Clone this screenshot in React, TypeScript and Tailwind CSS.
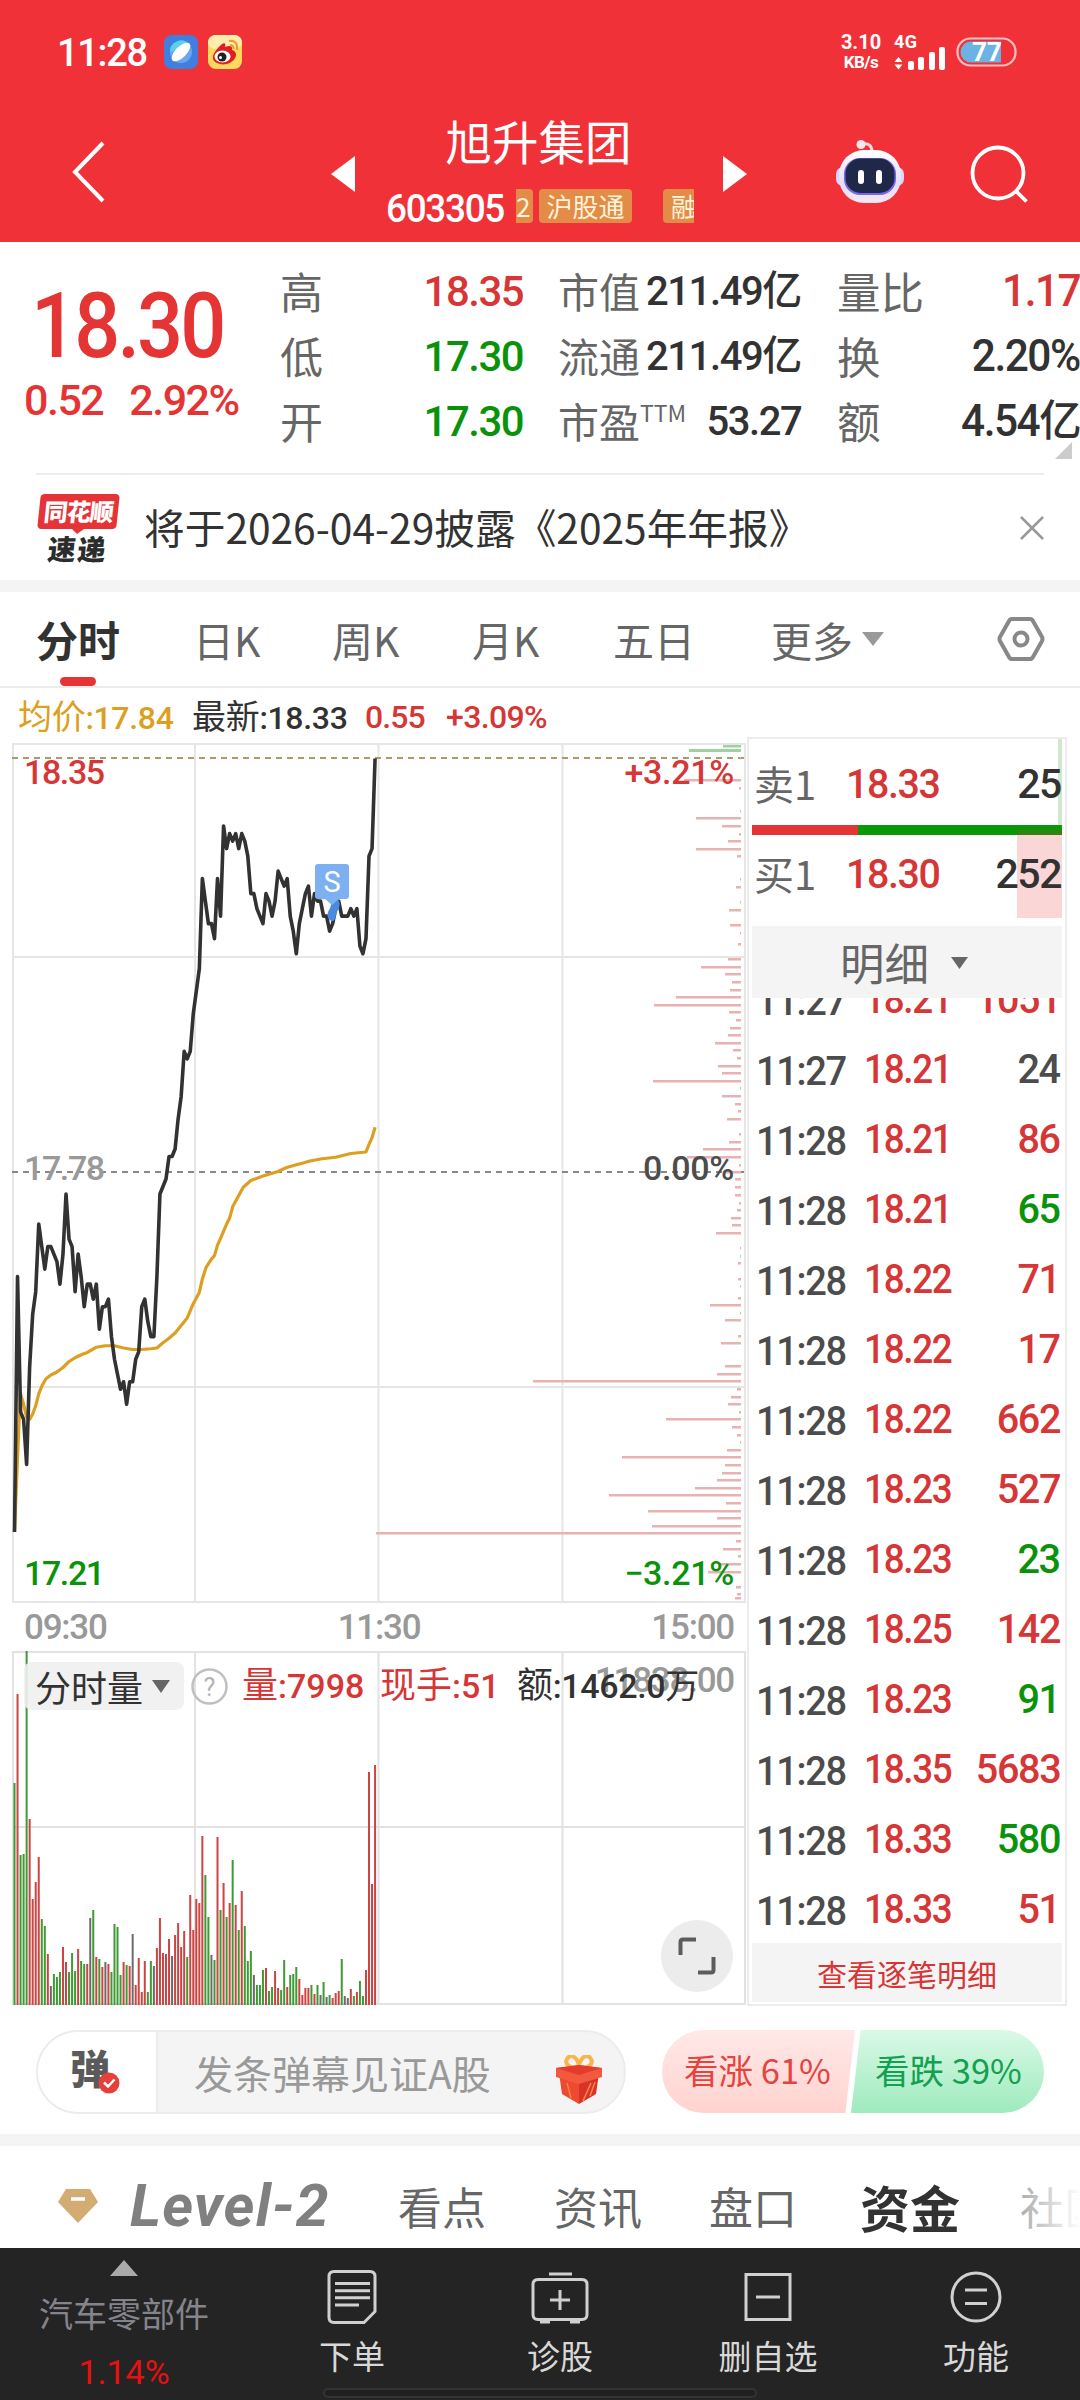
import type { ReactNode } from "react";

const profileBars: [number, number][] = [
  [758, 1], [780, 57], [788, 2], [811, 1], [818, 45], [826, 19], [834, 2], [841, 13], [849, 45], [856, 4],
  [879, 1], [887, 5], [902, 1], [910, 12], [925, 11], [933, 1], [944, 3], [959, 13], [967, 40], [974, 16],
  [982, 9], [990, 11], [997, 65], [1005, 87], [1012, 12], [1020, 5], [1028, 11], [1035, 13], [1043, 26],
  [1050, 8], [1058, 4], [1066, 23], [1073, 19], [1081, 88], [1088, 1], [1096, 19], [1104, 6], [1111, 3],
  [1119, 14], [1134, 2], [1142, 12], [1149, 38], [1157, 54], [1165, 2], [1172, 16], [1179, 6], [1187, 6],
  [1195, 6], [1203, 2], [1210, 4], [1218, 10], [1225, 9], [1233, 25], [1248, 1], [1256, 1], [1263, 3],
  [1279, 3], [1286, 1], [1298, 3], [1305, 31], [1313, 1], [1320, 16], [1336, 3], [1343, 20], [1366, 16],
  [1374, 24], [1381, 208], [1389, 4], [1397, 10], [1404, 13], [1412, 2], [1419, 75], [1427, 9], [1435, 4],
  [1442, 1], [1450, 14], [1457, 119], [1465, 16], [1473, 19], [1480, 24], [1488, 46], [1495, 132],
  [1503, 15], [1511, 93], [1518, 24], [1526, 89], [1533, 365], [1541, 5], [1549, 18], [1556, 3], [1564, 23],
  [1572, 33], [1587, 5], [1594, 4], [1598, 6],
];

// minute prices in cents, relative to the previous close
const prices = [
  -48, -14, -32, -33, -39, -26, -19, -16, -7, -10, -13, -10, -10, -11, -12, -15, -11, -3, -9, -10, -16, -11,
  -14, -18, -15, -15, -17, -15, -21, -18, -18, -17, -22, -25, -27, -29, -28, -31, -28, -28, -25, -24, -18, -17,
  -20, -22, -22, -14, -3, -2, -1, 2, 2, 3, 7, 10, 16, 15, 16, 21, 24, 27, 39, 36, 33, 33, 31, 39, 34, 46, 43,
  45, 44, 45, 43, 45, 44, 42, 37, 37, 35, 34, 33, 37, 36, 34, 36, 40, 39, 38, 39, 34, 32, 29, 33, 35, 37, 38,
  34, 37, 36, 36, 34, 34, 32, 33, 35, 36, 34, 34, 34, 35, 34, 35, 30, 29, 31, 42, 43, 55,
];

const average: [number, number][] = [
  [0, -48], [1.9, -29.5], [3, -31], [4, -32.7], [5, -33], [6, -32.3], [7, -31.2], [8, -29.6], [9.1, -28.5],
  [10.4, -27.6], [12, -27.1], [14, -26.7], [16, -26.1], [18, -25.3], [20, -24.8], [22, -24.4], [24, -24.1],
  [27, -23.4], [30, -23.2], [33, -23.2], [36, -23.5], [39, -23.7], [42, -23.7], [45, -23.6], [47, -23.5],
  [49, -22.8], [51, -22.2], [53, -21.5], [55, -20.5], [57, -19.5], [59, -17.6], [61, -16.1], [62, -14.3],
  [63.2, -12.8], [64.6, -11.9], [66, -11.2], [67, -9.8], [68, -8.9], [70, -7], [71, -6.2], [72, -4.7],
  [74, -3.2], [75.5, -2.1], [78, -1.2], [82, -0.6], [87, 0], [89.6, 0.5], [93, 0.9], [95, 1.1], [97.5, 1.4],
  [101.5, 1.7], [106, 1.9], [109, 2.2], [111, 2.4], [116, 2.6], [117, 3.6], [118, 4.5], [119, 5.9],
];

const volumes =
  "g222 r311 g150 g151 g355 r186 r106 r123 r148 g86 g79 r51 k19 g31 g28 g33 r58 r43 g33 g52 g34 r56 g44 g41 r41 k87 g95 r48 g46 r38 k43 r41 g33 g81 g78 g30 r43 g40 r39 k71 r20 r47 r13 r44 g13 g44 k39 r57 r87 r52 r51 r66 k49 r70 r82 r58 r74 g48 r110 r75 r106 r102 r169 g130 g88 k50 g45 r168 g95 r122 g88 r102 g145 r100 g75 r114 g79 g44 g54 k30 g20 g20 g35 r37 g14 g18 r34 r17 g15 g45 r18 g30 g31 g38 r26 r10 r17 r17 g20 r11 g20 k10 g23 k8 g10 r7 r12 r14 g46 k9 k7 r16 g9 r13 g24 g9 r35 r233 r121 r240".split(
    " ",
  );

const volumeColors: Record<string, string> = { g: "#3f9a35", r: "#cc4444", k: "#6b6b6b" };

const trades = [
  ["11:27", "18.21", "1051", "r"],
  ["11:27", "18.21", "24", "k"],
  ["11:28", "18.21", "86", "r"],
  ["11:28", "18.21", "65", "g"],
  ["11:28", "18.22", "71", "r"],
  ["11:28", "18.22", "17", "r"],
  ["11:28", "18.22", "662", "r"],
  ["11:28", "18.23", "527", "r"],
  ["11:28", "18.23", "23", "g"],
  ["11:28", "18.25", "142", "r"],
  ["11:28", "18.23", "91", "g"],
  ["11:28", "18.35", "5683", "r"],
  ["11:28", "18.33", "580", "g"],
  ["11:28", "18.33", "51", "r"],
];

const textColors: Record<string, string> = {
  r: "text-[#d73636]",
  g: "text-[#0a930a]",
  k: "text-[#4c4c4c]",
};

const x = (minute: number) => 2.5 + minute * 3.03;
const y = (cents: number) => 428.5 - cents * 7.51;

function Num({ children, className = "" }: { children: ReactNode; className?: string }) {
  return (
    <span className={`whitespace-nowrap font-['Roboto','Noto_Sans_CJK_SC',sans-serif] font-medium ${className}`}>
      {children}
    </span>
  );
}

// narrow digits
function Tight({ children, className = "" }: { children: ReactNode; className?: string }) {
  return <Num className={`inline-block translate-y-px tracking-[-0.035em] ${className}`}>{children}</Num>;
}

function StatusBar() {
  return (
    <div className="flex h-[104px] items-center pl-[57px] pr-[62px] text-white">
      <Tight className="w-[107px] text-[38px]">11:28</Tight>
      <svg className="mr-[10px] size-[34px]" viewBox="0 0 34 34">
        <rect width="34" height="34" rx="8" fill="#3f7fe0" />
        <circle cx="17" cy="17" r="11" fill="#6aa5f0" />
        <path d="M6 17a11 11 0 0 1 19-8z" fill="#58d0ee" />
        <ellipse cx="17" cy="17" rx="5.500" ry="12" fill="#fff" transform="rotate(45 17 17)" />
      </svg>
      <svg className="size-[34px]" viewBox="0 0 34 34">
        <rect width="34" height="34" rx="8" fill="#ffd85c" />
        <rect width="34" height="14" rx="8" fill="#ffecb0" />
        <path d="M14 9c3-2 4 0 3 3 5-2 8-1 7 3 4 1 5 5 3 8-3 6-12 8-18 5s-6-9 5-19z" fill="#e02020" />
        <ellipse cx="14.500" cy="21.500" rx="8" ry="6" fill="#fff" />
        <circle cx="14" cy="22" r="4.500" fill="#222" />
        <circle cx="12.500" cy="22.500" r="1.500" fill="#fff" />
        <path d="M21 6c6-1 9 3 8 9M22 10c3 0 4 2 3.500 4" fill="none" stroke="#f29a1f" strokeWidth="2" />
      </svg>
      <div className="ml-auto flex items-center">
        <div className="flex w-[44px] flex-col items-center font-['Roboto',sans-serif] text-[20px] font-bold leading-[20px]">
          <span>3.10</span>
          <span className="text-[17px] tracking-[-0.03em]">KB/s</span>
        </div>
        <svg className="ml-[11px] h-[38px] w-[54px]" viewBox="0 0 54 38">
          <text x="0" y="15" fill="#fff" fontFamily="Roboto" fontSize="18" fontWeight="700" textLength="23">4G</text>
          <path d="M4.500 24l4 5h-8zM4.500 36.500l4-5h-8z" fill="#fff" />
          <g fill="#fff">
            <rect x="14" y="28" width="6" height="9" rx="2" />
            <rect x="24" y="24" width="6" height="13" rx="2" />
            <rect x="35" y="19" width="6" height="18" rx="2" />
            <rect x="45" y="14" width="6" height="23" rx="2" />
          </g>
        </svg>
        <svg className="ml-[8px] h-[30px] w-[62px]" viewBox="0 0 62 30">
          <rect x="1.500" y="1.500" width="58" height="27" rx="13" fill="none" stroke="#fbc0c2" strokeWidth="2.200" />
          <path d="M15 4.500h30v21H15a10.500 10.500 0 0 1 0-21z" fill="#6cb2e2" />
          <text x="31" y="24" fill="#fff" fontFamily="Roboto" fontSize="26" fontWeight="700" textAnchor="middle">77</text>
        </svg>
      </div>
    </div>
  );
}

function Header() {
  return (
    <header className="h-[242px] bg-[#f13138]">
      <StatusBar />
      <div className="flex h-[138px] text-white">
        <svg className="ml-[69px] mt-[35px] h-[66px] w-[40px]" viewBox="0 0 40 66" fill="none" stroke="#fff" strokeWidth="4">
          <path d="M34 4L6 33l28 29" />
        </svg>
        <svg className="ml-[221px] mt-[51px] h-[38px] w-[26px]" viewBox="0 0 26 38">
          <path d="M1 19L25 1v36z" fill="#fff" />
        </svg>
        <div className="ml-[30px] flex w-[308px] flex-col items-center pt-[9px]">
          <h1 className="pr-[3px] text-[46.500px] leading-[54px]">旭升集团</h1>
          <div className="mt-[5px] flex h-[70px] w-full items-start pt-[17px]">
            <div className="w-[130px] shrink-0">
              <Tight className="origin-left scale-x-[0.97] text-[38px] leading-[38px]">603305</Tight>
            </div>
            <div className="flex w-[178px] items-center overflow-hidden text-[26px] leading-[34px] text-[#fff3d8]">
              <span className="h-[34px] w-[17px] shrink-0 rounded-r bg-[#e28c48]">2</span>
              <span className="ml-[6px] h-[34px] w-[93px] shrink-0 rounded bg-[#e28c48] text-center">沪股通</span>
              <span className="ml-[31px] h-[34px] w-[70px] shrink-0 rounded bg-[#e28c48] pl-[8px]">融资</span>
            </div>
          </div>
        </div>
        <svg className="ml-[28px] mt-[51px] h-[38px] w-[26px]" viewBox="0 0 26 38">
          <path d="M25 19L1 1v36z" fill="#fff" />
        </svg>
        <svg className="ml-[88px] mt-[34px] h-[68px] w-[70px]" viewBox="0 0 70 68">
          <defs>
            <linearGradient id="shell" x1="0" y1="0" x2="0" y2="1">
              <stop offset="0" stopColor="#ffffff" />
              <stop offset="0.600" stopColor="#e4defa" />
              <stop offset="1" stopColor="#f6e6f2" />
            </linearGradient>
          </defs>
          <path d="M27 6c6-1 9 2 9 8" fill="none" stroke="#f3d9e6" strokeWidth="3" />
          <circle cx="25" cy="6.500" r="4.500" fill="#f8e6ee" />
          <rect x="0" y="29" width="68" height="19" rx="7" fill="#dcd5f8" />
          <rect x="3" y="12" width="62" height="53" rx="25" fill="url(#shell)" />
          <rect x="8" y="20" width="52" height="37" rx="16" fill="#7668e0" />
          <rect x="9.500" y="20.500" width="49" height="34.500" rx="15" fill="#1f2848" />
          <rect x="22" y="32" width="6" height="14" rx="3" fill="#fff" />
          <rect x="40" y="32" width="6" height="14" rx="3" fill="#fff" />
        </svg>
        <svg className="ml-[64px] mt-[40px] h-[62px] w-[62px]" viewBox="0 0 62 62" fill="none" stroke="#fff" strokeWidth="3.800">
          <circle cx="28" cy="29" r="25.500" />
          <path d="M46 47l10.500 10.500" />
        </svg>
      </div>
    </header>
  );
}

function Stat({ label, value, color = "text-[#323232]" }: { label: ReactNode; value: string; color?: string }) {
  return (
    <div className="flex h-[65px] items-center justify-between">
      <span className="whitespace-nowrap text-[#666666]">{label}</span>
      <Tight className={`origin-right scale-x-[0.975] ${color}`}>{value}</Tight>
    </div>
  );
}

function Quote() {
  return (
    <section className="relative flex h-[231px] pt-[16px]">
      <div className="w-[262px] pl-[24px] text-[#e43434]">
        <div className="mt-[18px] pl-[7px]">
          <Tight className="origin-left scale-x-[0.9] text-[90px] leading-[100px]">18.30</Tight>
        </div>
        <Tight className="mt-[-2px] origin-left text-[43px] leading-[50px]">
          0.52<span className="ml-[26px]">2.92%</span>
        </Tight>
      </div>
      <div className="ml-[18px] w-[243px] text-[43px]">
        <Stat label="高" value="18.35" color="text-[#d73636]" />
        <Stat label="低" value="17.30" color="text-[#0a930a]" />
        <Stat label="开" value="17.30" color="text-[#0a930a]" />
      </div>
      <div className="ml-[35px] w-[243px] text-[41px]">
        <Stat label="市值" value="211.49亿" />
        <Stat label="流通" value="211.49亿" />
        <Stat label={<>市盈<sup className="top-[-0.7em] text-[23px]">TTM</sup></>} value="53.27" />
      </div>
      <div className="ml-[36px] w-[243px] text-[43.500px]">
        <Stat label="量比" value="1.17" color="text-[#d73636]" />
        <Stat label="换" value="2.20%" />
        <Stat label="额" value="4.54亿" />
      </div>
      <svg className="absolute left-[1055px] top-[200px] size-[17px]" viewBox="0 0 17 17">
        <path d="M17 0v17H0z" fill="#cccccc" />
      </svg>
    </section>
  );
}

function Notice() {
  return (
    <section className="mx-[36px] flex h-[107px] items-center border-t-2 border-[#ececec]">
      <div className="flex w-[84px] flex-col items-center">
        <div className="h-[35px] w-[79px] -skew-x-6 rounded-[4px] bg-[#e53338] text-center text-[24px] font-black leading-[34px] tracking-[-0.04em] text-white">
          同花顺
        </div>
        <svg className="h-[5px] w-[12px]" viewBox="0 0 12 5">
          <path d="M0 0h12L5 5z" fill="#e53338" />
        </svg>
        <div className="-skew-x-6 text-[28px] font-black leading-[28px] tracking-[0.06em] text-[#2c2c2c]">速递</div>
      </div>
      <p className="ml-[24px] text-[40.700px] text-[#323232]">将于2026-04-29披露《2025年年报》</p>
      <svg className="ml-auto size-[24px]" viewBox="0 0 24 24" stroke="#999" strokeWidth="2.500">
        <path d="M1 1l22 22M23 1L1 23" />
      </svg>
    </section>
  );
}

function ChartTabs() {
  return (
    <nav className="flex h-[96px] items-center border-b-2 border-[#ececec] text-[41px] text-[#666666]">
      <div className="relative ml-[36px] w-[157px] text-[42px] font-bold text-[#323232]">
        分时
        <span className="absolute left-[24px] top-[59px] h-[9px] w-[36px] rounded-full bg-[#e43434]" />
      </div>
      <span className="w-[139px]">日K</span>
      <span className="w-[140px]">周K</span>
      <span className="w-[141px]">月K</span>
      <span className="w-[158px]">五日</span>
      <span>更多</span>
      <svg className="ml-[9px] h-[16px] w-[22px]" viewBox="0 0 22 16">
        <path d="M0 1h22L11 15z" fill="#999" />
      </svg>
      <svg className="ml-[113px] h-[46px] w-[48px]" viewBox="0 0 48 46" fill="none" stroke="#888" strokeWidth="4">
        <path d="M15 3h18q2 0 3 2l9 16q1 2 0 4l-9 16q-1 2-3 2H15q-2 0-3-2L3 25q-1-2 0-4l9-16q1-2 3-2z" />
        <circle cx="24" cy="23" r="6.500" />
      </svg>
    </nav>
  );
}

function PriceChart() {
  return (
    <svg className="h-[860px] w-[735px]" viewBox="0 0 735 860">
      <g stroke="#e6e6e6" strokeWidth="2" fill="none">
        <path d="M0 1h734M0 214h734M0 644h734M0 859h734M1 0v860M183 0v860M366.500 0v860M550.500 0v860M733 0v860" />
      </g>
      <path d="M0 429h734" stroke="#888" strokeWidth="2" strokeDasharray="6 5" />
      <path d="M0 15h734" stroke="#ab9a6a" strokeWidth="2" strokeDasharray="6 5" />
      <rect x="711" y="2" width="18" height="2.500" fill="#9fd09f" />
      <rect x="677" y="6" width="52" height="3" fill="#9fd09f" />
      {profileBars.map(([top, width]) => (
        <rect key={top} x={729 - width} y={top - 744} width={width} height="2.500" fill="#e9b2b2" />
      ))}
      <polyline
        points={average.map(([m, c]) => `${x(m)},${y(c)}`).join(" ")}
        fill="none"
        stroke="#dd9f22"
        strokeWidth="3.200"
        strokeLinejoin="round"
      />
      <polyline
        points={prices.map((c, m) => `${x(m)},${y(c)}`).join(" ")}
        fill="none"
        stroke="#323232"
        strokeWidth="3.600"
        strokeLinejoin="round"
      />
      <path d="M322 155c6 0 7 7 4 12s-2 12-6 11-6-6-3-11 2-10 5-12z" fill="#4a8ae0" />
      <rect x="303" y="121" width="34" height="35" rx="3" fill="#7db0f0" />
      <path d="M312 155l8 7 8-7z" fill="#7db0f0" />
      <text x="320" y="149" fill="#fff" fontFamily="Roboto" fontSize="29" textAnchor="middle">S</text>
      <g fontFamily="Roboto" fontSize="34" fontWeight="500" letterSpacing="-1.400">
        <text x="12" y="41" fill="#d73636">18.35</text>
        <text x="12" y="437" fill="#999">17.78</text>
        <text x="12" y="842" fill="#0a930a">17.21</text>
      </g>
      <g fontFamily="Roboto" fontSize="34" fontWeight="500" letterSpacing="-0.300" textAnchor="end">
        <text x="722" y="41" fill="#d73636">+3.21%</text>
        <text x="722" y="437" fill="#4c4c4c">0.00%</text>
        <text x="722" y="842" fill="#0a930a">−3.21%</text>
      </g>
    </svg>
  );
}

function VolumeChart() {
  return (
    <div className="relative h-[354px]">
      <svg className="h-[354px] w-[735px]" viewBox="0 0 735 354">
        <path
          d="M0 1h734M0 176h734M0 353h734M1 0v354M183 0v354M366.500 0v354M550.500 0v354M733 0v354"
          stroke="#e2e2e2"
          strokeWidth="2"
        />
        {volumes.map((v, i) => (
          <rect
            key={i}
            x={1.5 + i * 3.03}
            y={354 - Number(v.slice(1))}
            width="2"
            height={Number(v.slice(1))}
            fill={volumeColors[v[0]]}
          />
        ))}
      </svg>
      <Tight className="absolute right-[13px] top-[11px] text-[35px] text-[#999]">11838.00</Tight>
      <div className="absolute left-[12px] top-[11px] flex h-[48px] items-center text-[34px]">
        <div className="flex h-[48px] w-[160px] items-center rounded-[8px] bg-[#efefef]/90 pl-[11px] text-[36px] text-[#323232]">
          分时量
          <svg className="ml-[9px] h-[13px] w-[18px]" viewBox="0 0 18 13">
            <path d="M0 0h18L9 13z" fill="#666" />
          </svg>
        </div>
        <svg className="ml-[7px] size-[37px]" viewBox="0 0 37 37">
          <circle cx="18.500" cy="18.500" r="17" fill="none" stroke="#c0c0c0" strokeWidth="2.500" />
          <text x="18.500" y="27.500" fill="#b4b4b4" fontFamily="Roboto" fontSize="25" textAnchor="middle">?</text>
        </svg>
        <Num className="ml-[14px] w-[138px] text-[#d73636]">
          <span className="text-[36px] font-normal">量</span>:7998
        </Num>
        <Num className="w-[137px] text-[#d73636]">
          <span className="text-[36px] font-normal">现手</span>:51
        </Num>
        <Num className="tracking-[-0.01em] text-[#323232]">
          <span className="text-[36px] font-normal">额</span>:1462.0<span className="font-normal">万</span>
        </Num>
      </div>
      <div className="absolute left-[649px] top-[269px] flex size-[72px] items-center justify-center rounded-full bg-[#ececec]">
        <svg className="h-[38px] w-[38px]" viewBox="0 0 38 38" fill="none" stroke="#5c5c5c" strokeWidth="4">
          <path d="M18 2.500H5q-2.500 0-2.500 2.500v13M20 35.500h13q2.500 0 2.500-2.500V20" />
        </svg>
      </div>
    </div>
  );
}

function BookRow({ label, price, amount }: { label: string; price: string; amount: string }) {
  return (
    <>
      <span className="w-[92px] text-[#666666]">{label}</span>
      <Tight className="origin-left scale-x-[0.96] text-[41px] text-[#d73636]">{price}</Tight>
      <Tight className="relative ml-auto origin-right text-[41px] text-[#323232]">{amount}</Tight>
    </>
  );
}

function OrderBook() {
  return (
    <aside className="mt-[-6px] flex h-[1269px] w-[320px] flex-col border-2 border-[#ececec] px-[3px] text-[40px]">
      <div className="relative flex h-[86px] shrink-0 items-center pl-[2px] pr-px pt-[2px]">
        <div className="absolute right-0 top-0 h-full w-[4px] bg-[#cfe8cf]" />
        <BookRow label="卖1" price="18.33" amount="25" />
      </div>
      <div className="flex h-[10px] shrink-0">
        <div className="w-[106px] bg-[#e43434]" />
        <div className="flex-1 bg-[#089808]" />
      </div>
      <div className="relative flex h-[84px] shrink-0 items-center pb-[8px] pl-[2px] pr-px">
        <div className="absolute right-0 top-[-5px] h-[88px] w-[45px] bg-[#e43434]/20" />
        <BookRow label="买1" price="18.30" amount="252" />
      </div>
      <div className="mt-[7px] flex h-[72px] shrink-0 items-center bg-[#f4f4f4] pl-[88px] pt-px text-[44.500px] text-[#666666]">
        明细
        <svg className="ml-[22px] h-[12px] w-[17px]" viewBox="0 0 17 12">
          <path d="M0 0h17L8.500 12z" fill="#666" />
        </svg>
      </div>
      <div className="h-[945px] shrink-0 overflow-hidden">
        <div className="mt-[-34px]">
          {trades.map(([time, price, volume, color], i) => (
            <div key={i} className="flex h-[70px] items-center pl-[4px] pr-[2px]">
              <div className="w-[108px]">
                <Tight className="origin-left scale-x-[0.95] text-[#4c4c4c]">{time}</Tight>
              </div>
              <Tight className="origin-left scale-x-[0.92] text-[#d73636]">{price}</Tight>
              <Tight className={`ml-auto origin-right scale-x-[0.99] ${textColors[color]}`}>{volume}</Tight>
            </div>
          ))}
        </div>
      </div>
      <div className="flex h-[59px] shrink-0 items-center justify-center bg-[#f4f4f4] pt-px text-[30px] text-[#d73636]">
        查看逐笔明细
      </div>
    </aside>
  );
}

function Trend() {
  return (
    <section>
      <div className="flex h-[55px] items-center pl-[18px] pt-[3px] text-[32px] text-[#323232]">
        <Num className="w-[174px] tracking-[-0.01em] text-[#dd9f22]">
          <span className="text-[34px] font-normal">均价</span>:17.84
        </Num>
        <Num className="w-[173px] tracking-[-0.01em]">
          <span className="text-[34px] font-normal">最新</span>:18.33
        </Num>
        <Num className="w-[81px] tracking-[-0.03em] text-[#d73636]">0.55</Num>
        <Num className="tracking-[-0.02em] text-[#d73636]">+3.09%</Num>
      </div>
      <div className="flex h-[1262px] pl-[12px]">
        <div className="w-[735px] shrink-0">
          <PriceChart />
          <div className="mt-[-1px] flex h-[49px] items-center justify-between pl-[12px] pr-[13px] text-[35px] text-[#999]">
            <Tight>09:30</Tight>
            <Tight>11:30</Tight>
            <Tight>15:00</Tight>
          </div>
          <VolumeChart />
        </div>
        <OrderBook />
      </div>
    </section>
  );
}

function Barrage() {
  return (
    <section className="flex h-[129px] items-start px-[36px] pt-[25px]">
      <div className="flex h-[84px] w-[590px] items-center overflow-hidden rounded-full border-2 border-[#ececec] bg-[#f4f4f4]">
        <div className="relative flex h-full w-[120px] items-center border-r-2 border-[#ececec] bg-white pb-[10px] pl-[32px] text-[40px] font-black text-[#5a5a5a]">
          弹
          <svg className="absolute left-[60px] top-[40px] size-[22px]" viewBox="0 0 22 22">
            <circle cx="11" cy="11" r="10.500" fill="#e5403a" />
            <path d="M6 10.500l4 4 6.500-7" fill="none" stroke="#fff" strokeWidth="2.500" />
          </svg>
        </div>
        <span className="ml-[36px] text-[39px] text-[#999]">发条弹幕见证A股</span>
        <svg className="ml-auto mr-[21px] mt-[15px] h-[50px] w-[48px]" viewBox="0 0 48 50">
          <path d="M24 14c-9-1-15-5-12-10s9-4 12 6c3-10 9-11 12-6s-3 9-12 10z" fill="none" stroke="#f7b54a" strokeWidth="4" />
          <path d="M4 18l20 8v23L7 39z" fill="#ee4a2f" />
          <path d="M44 18l-20 8v23l17-10z" fill="#d93226" />
          <path d="M1 13l23-3 23 3v9l-23 7-23-7z" fill="#f25a40" />
          <path d="M1 13l23-3 23 3-23 7z" fill="#e63a2c" />
          <path d="M12 28l4 15M36 28l-8 18M40 27l-5 14" stroke="#fb8450" strokeWidth="1.500" />
        </svg>
      </div>
      <div className="ml-[36px] flex">
        <div className="flex h-[83px] w-[193px] items-center rounded-l-full bg-linear-to-b from-[#ffe9e8] to-[#ffd3cf] pb-[4px] pl-[22px] text-[34.500px] text-[#e5433e] [clip-path:polygon(0_0,100%_0,95%_100%,0_100%)]">
          <span className="whitespace-nowrap">看涨 61%</span>
        </div>
        <div className="ml-[-4px] flex h-[83px] w-[193px] items-center rounded-r-full bg-linear-to-b from-[#d9f9e7] to-[#9eeabd] pb-[4px] pl-[24px] text-[34.500px] text-[#12a150] [clip-path:polygon(5%_0,100%_0,100%_100%,0_100%)]">
          <span className="whitespace-nowrap">看跌 39%</span>
        </div>
      </div>
    </section>
  );
}

function SectionTabs() {
  return (
    <nav className="relative flex h-[102px] items-center overflow-hidden whitespace-nowrap pt-[18px] text-[44px] text-[#666666]">
      <svg className="ml-[57px] h-[36px] w-[42px] shrink-0" viewBox="0 0 42 36">
        <path d="M9 1h24l8 13-20 21L1 14z" fill="#d3ac73" />
        <path d="M14 11h14" stroke="#fff" strokeWidth="3.500" />
      </svg>
      <span className="ml-[31px] w-[268px] shrink-0 font-['Roboto',sans-serif] text-[59px] font-bold italic leading-[60px] tracking-[0.02em] text-[#808080]">
        Level-2
      </span>
      <span className="w-[156px] shrink-0">看点</span>
      <span className="w-[155px] shrink-0">资讯</span>
      <span className="w-[151px] shrink-0">盘口</span>
      <span className="w-[160px] shrink-0 text-[50px] font-bold text-[#323232]">资金</span>
      <span>社区</span>
      <div className="absolute right-0 top-0 h-full w-[66px] bg-linear-to-r from-white/40 to-white" />
    </nav>
  );
}

const actions = [
  {
    label: "下单",
    icon: (
      <>
        <path d="M9 6.500h36q5 0 5 5v35l-11 11H9q-5 0-5-5v-41q0-5 5-5z" />
        <path d="M10 18.500h35M10 25.700h35M10 32.700h35M10 40h24" />
      </>
    ),
  },
  {
    label: "诊股",
    icon: (
      <>
        <path d="M5 14.500h44q5 0 5 5v30q0 5-5 5H5q-5 0-5-5v-30q0-5 5-5zM16 9h23M27 25v20M17 35h20" />
        <path d="M7 56.500h10M37 56.500h10" strokeWidth="4" />
      </>
    ),
  },
  { label: "删自选", icon: <path d="M5 9.500h44v45H5zM15 32h24" /> },
  {
    label: "功能",
    icon: (
      <>
        <circle cx="27" cy="32" r="24" />
        <path d="M16 25h22M16 38.500h22" />
      </>
    ),
  },
];

function BottomNav() {
  return (
    <footer className="h-[152px] bg-[#242424]">
      <div className="flex h-[140px] text-[33px] text-[#d8d8d8]">
        <div className="flex w-[248px] flex-col items-center pt-[12px]">
          <svg className="h-[16px] w-[28px] shrink-0" viewBox="0 0 28 16">
            <path d="M14 0l14 16H0z" fill="#aaa" />
          </svg>
          <span className="mt-[14px] shrink-0 text-[34px] leading-[46px] text-[#84848c]">汽车零部件</span>
          <span className="mt-[15px] shrink-0 font-['Roboto',sans-serif] text-[34px] leading-[42px] text-[#e81010]">1.14%</span>
        </div>
        {actions.map(({ label, icon }) => (
          <div key={label} className="flex w-[208px] flex-col items-center pt-[17px]">
            <svg className="h-[60px] w-[60px]" viewBox="-3 0 60 60" fill="none" stroke="#d0d0d0" strokeWidth="3">
              {icon}
            </svg>
            <span className="mt-[6px] leading-[48px]">{label}</span>
          </div>
        ))}
      </div>
      <div className="mx-auto h-[10px] w-[434px] rounded-full border-2 border-[#333333] bg-[#202020]" />
    </footer>
  );
}

export default function App() {
  return (
    <main className="h-[2400px] w-[1080px] overflow-hidden bg-white font-['Noto_Sans_CJK_SC',sans-serif] leading-none">
      <Header />
      <Quote />
      <Notice />
      <div className="h-[12px] bg-[#f4f4f4]" />
      <ChartTabs />
      <Trend />
      <Barrage />
      <div className="h-[12px] bg-[#f4f4f4]" />
      <SectionTabs />
      <BottomNav />
    </main>
  );
}
